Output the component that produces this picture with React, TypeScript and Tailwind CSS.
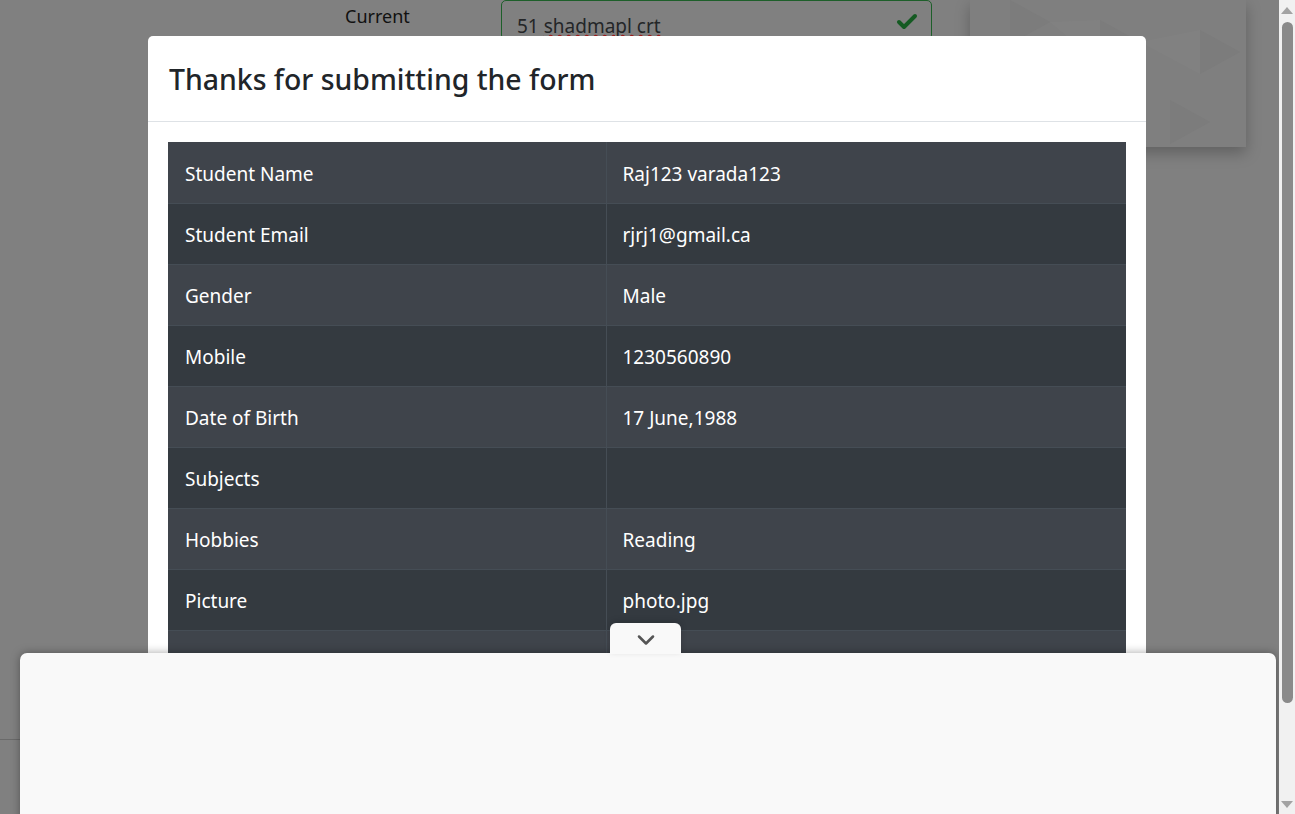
import { Check, ChevronDown } from "lucide-react";

const rows: [string, string][] = [
  ["Student Name", "Raj123 varada123"],
  ["Student Email", "rjrj1@gmail.ca"],
  ["Gender", "Male"],
  ["Mobile", "1230560890"],
  ["Date of Birth", "17 June,1988"],
  ["Subjects", ""],
  ["Hobbies", "Reading"],
  ["Picture", "photo.jpg"],
  ["Address", ""],
];

const font = { fontFamily: '"Noto Sans", "Open Sans", sans-serif' };

const App = () => {
  return (
    <div className="flex h-[814px] w-full overflow-hidden bg-[#808080]" style={font}>
      {/* Page (dimmed behind the modal) */}
      <div className="relative flex-1 overflow-hidden">
        <div className="flex items-start">
          <div className="ml-[345px] w-[156px] pt-[3px] text-[18px] text-[#111]">Current</div>
          <div className="flex h-[40px] w-[431px] items-center justify-between rounded-[5px] border border-[#1d5f2a] pl-[15px] pr-[12px] pt-[12px] text-[19px] text-[#242628]">
            <span>
              51{" "}
              <span className="underline decoration-wavy decoration-[#9a1c1c] underline-offset-[1px]">shadmapl crt</span>
            </span>
            <Check className="mb-[8px] h-[24px] w-[24px] text-[#145a22]" strokeWidth={4} />
          </div>
          <div className="ml-[38px] h-[147px] w-[276px] overflow-hidden bg-[#7f7f7f] shadow-[0_6px_14px_rgba(0,0,0,0.25)]">
            <svg width="276" height="147" viewBox="0 0 276 147">
              <g fill="#7a7a7a" opacity="0.5">
                <polygon points="40,0 80,22 40,44" />
                <polygon points="130,20 170,42 130,64" />
                <polygon points="230,30 270,52 230,74" />
                <polygon points="80,70 120,92 80,114" />
                <polygon points="200,100 240,122 200,144" />
                <polygon points="0,60 30,78 0,96" />
              </g>
              <g fill="#848484" opacity="0.5">
                <polygon points="80,22 130,20 130,64" />
                <polygon points="170,42 230,30 230,74" />
                <polygon points="120,92 170,80 170,130" />
                <polygon points="30,100 80,114 30,140" />
              </g>
            </svg>
          </div>
        </div>
        <div className="absolute left-0 top-[739px] h-px w-[20px] bg-[#6a6a6a]" />

        {/* Modal */}
        <div className="absolute left-[148px] top-[36px] h-[800px] w-[998px] rounded-[5px] bg-white">
          <div className="flex h-[86px] items-center border-b border-[#dee2e6] px-[21px] pt-[2px]">
            <h5 className="text-[28.4px] font-medium text-[#212529]">Thanks for submitting the form</h5>
          </div>
          <div className="px-[20px] pt-[20px]">
            <table className="w-full border-collapse text-[19px] text-white">
              <tbody>
                {rows.map(([label, value], i) => (
                  <tr
                    key={label}
                    className={
                      i === 0
                        ? "h-[61px] bg-[#3f444b]"
                        : i % 2 === 0
                          ? "h-[61px] border-t border-[#454d55] bg-[#3f444b]"
                          : "h-[61px] border-t border-[#454d55] bg-[#343a40]"
                    }
                  >
                    <td className="w-[438px] pl-[17px] pt-[3px]">{label}</td>
                    <td className="border-l border-[#454d55] pl-[16px] pt-[3px]">{value}</td>
                  </tr>
                ))}
              </tbody>
            </table>
          </div>
        </div>

        {/* Bottom drawer */}
        <div className="absolute left-[20px] top-[653px] h-[170px] w-[1256px] rounded-[7px] bg-[#f9f9f9] shadow-[0_0_10px_rgba(0,0,0,0.35)]">
          <div className="absolute -top-[30px] left-[590px] flex h-[31px] w-[71px] items-center justify-center rounded-t-[6px] bg-[#f9f9f9] shadow-[0_-2px_6px_rgba(0,0,0,0.15)]">
            <ChevronDown className="mt-[2px] h-[28px] w-[28px] text-[#555]" strokeWidth={2.2} />
          </div>
        </div>
      </div>

      {/* Scrollbar */}
      <div className="flex w-[16px] flex-col items-center bg-[#f1f1f1]">
        <div className="mt-[7px] h-0 w-0 border-x-[6px] border-b-[7px] border-x-transparent border-b-[#a3a3a3]" />
        <div className="mt-[8px] h-[681px] w-[11px] rounded-full bg-[#8a8a8a]" />
        <div className="mt-auto mb-[6px] h-0 w-0 border-x-[6px] border-t-[7px] border-x-transparent border-t-[#a3a3a3]" />
      </div>
    </div>
  );
};

export default App;
